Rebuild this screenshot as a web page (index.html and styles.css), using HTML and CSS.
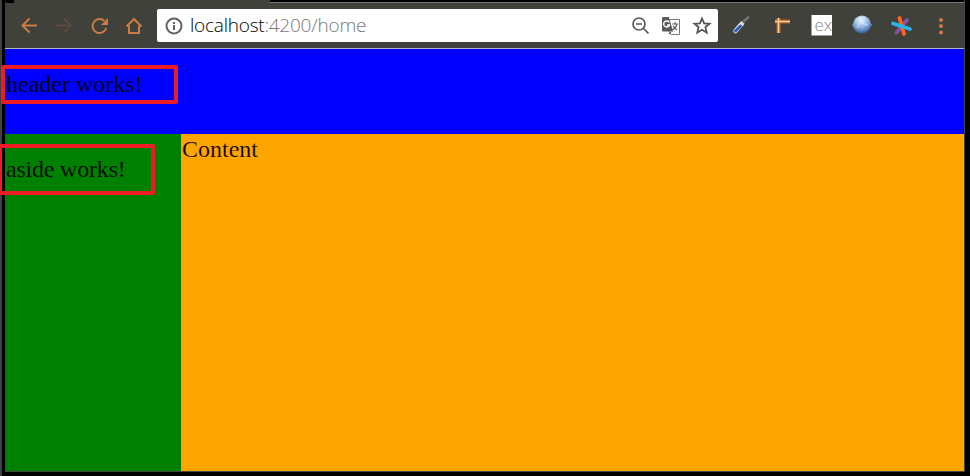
FILE: index.html
```html
<!DOCTYPE html>
<html lang="en">
<head>
<meta charset="utf-8">
<title>home</title>
<link rel="stylesheet" href="styles.css">
</head>
<body>
<div class="window">
  <div class="tabs"><i class="tab"></i><i class="strip"></i></div>
  <div class="toolbar">
    <svg class="nav" viewBox="0 0 140 40" fill="none" stroke="#cb7b45" stroke-width="2">
      <path d="M32 22.500H17.500M24.500 15.500L17.500 22.500L24.500 29.500"/>
      <path stroke="#5b4b3e" d="M51 22.500H66M59 15.500L66 22.500L59 29.500"/>
      <path d="M101.300 25A7 7 0 1 1 99.500 18"/>
      <path fill="#cb7b45" stroke="none" d="M103 15V22H96Z"/>
      <path d="M121.500 23.500L129 16L136.500 23.500M124 22.500V30H134V22.500"/>
    </svg>
    <div class="address">
      <svg class="info" viewBox="0 0 18 18" fill="none" stroke="#626262" stroke-width="2"><circle cx="9" cy="9" r="7.500"/><path d="M9 8V13M9 5V7"/></svg>
      <div class="url">localhost<span>:4200/home</span></div>
      <svg class="tools" viewBox="0 0 84 24" fill="none" stroke="#555" stroke-width="2">
        <path stroke-width="1.700" d="M14 10A6 6 0 1 1 2 10A6 6 0 1 1 14 10M12.500 14.500L17.500 19.500M5 10H11"/>
        <path fill="#fff" stroke="#777" stroke-width="1" d="M39 5.500H48.500V20.500H40L37 16"/>
        <path fill="#5b5b5b" stroke="none" d="M32 3H38L42 17.500H32Q31 17.500 31 16.500V4Q31 3 32 3Z"/>
        <path stroke="#fff" stroke-width="1.400" d="M38.300 8.500A3 3 0 1 0 38.500 11H36"/>
        <path stroke="#666" stroke-width="1.200" d="M41 10H47M44 8V10M46 10Q45 14 41 16M42 12L46 16M40 18L38 20"/>
        <path stroke-width="1.800" d="M71 4.500L73.100 9.300L78.500 9.800L74.400 13.200L75.700 18.700L71 15.800L66.300 18.700L67.600 13.200L63.500 9.800L68.900 9.300Z"/>
      </svg>
    </div>
    <svg class="extensions" viewBox="0 0 246 40">
      <path d="M17.500 28L24 20.500" stroke="#d9e4ee" stroke-width="4.500" stroke-linecap="round"/>
      <path d="M17.500 28L22.500 23" stroke="#315bb6" stroke-width="3" stroke-linecap="round"/>
      <path d="M24.500 19.500L31 13.500" stroke="#77716c" stroke-width="2.500"/>
      <path d="M57 18.500H72M60.500 15V30" stroke="#b76422" stroke-width="4"/>
      <path d="M57 18.500H72M60.500 15V30" stroke="#ffd39b" stroke-width="1.500"/>
      <path fill="#fff" d="M93.500 12H114V32.500H93.500Z"/>
      <text class="ex" x="96.500" y="27.500">ex</text>
      <defs><radialGradient id="globe" cx=".45" cy=".25" r=".8"><stop stop-color="#eaf7ff"/><stop offset=".5" stop-color="#91b7dd"/><stop offset="1" stop-color="#254c98"/></radialGradient></defs>
      <path d="M134 22L137 18H151L154 22L150 26H137Z" fill="#7398c1"/>
      <circle cx="144" cy="21.500" r="9" fill="url(#globe)"/>
      <path d="M138 15L142 20L139 25M142 20L150 22M147 14L145 20" stroke="#d4eafa" stroke-width=".7" fill="none"/>
      <g stroke-width="3.800" stroke-linecap="round"><path stroke="#8452a0" d="M178.500 29.500L189 17"/><path stroke="#ff651f" d="M181.500 15L186 31"/><path stroke="#2bb4e9" d="M175 20.500L192 26"/></g>
      <g fill="#cb7b45"><circle cx="223" cy="17" r="2"/><circle cx="223" cy="23" r="2"/><circle cx="223" cy="29.500" r="2"/></g>
    </svg>
  </div>
  <header class="header">header works!</header>
  <div class="main">
    <aside class="aside">aside works!</aside>
    <main class="content">Content</main>
  </div>
</div>
<div class="mark mark-header"></div>
<div class="mark mark-aside"></div>
</body>
</html>
```
FILE: styles.css
```css
* { box-sizing: border-box; }
body {
  margin: 0;
  width: 970px;
  height: 476px;
  padding-left: 5px;
  position: relative;
  overflow: hidden;
  background: linear-gradient(90deg, #414141 0 2px, #000 2px);
  font: 24px/28px "Liberation Serif", serif;
  color: #000;
}
.window {
  width: 960px;
  height: 472px;
  border-right: 1px solid #454545;
  border-bottom: 1px solid #454545;
  display: flex;
  flex-direction: column;
}
svg { display: block; flex: none; }
.tabs { height: 3px; display: flex; background: #40413a; }
.tab { width: 265px; border-left: 9px solid #000; border-bottom-left-radius: 3px; }
.strip { flex: 1; background: #000; border-bottom: 1px solid #777; }
.toolbar {
  height: 46px;
  display: flex;
  background: #40413a;
  border-bottom: 1px solid #b5b5b5;
}
.nav { width: 140px; height: 40px; margin-right: 12px; }
.address {
  flex: none;
  width: 561px;
  height: 33px;
  margin-top: 6px;
  padding: 0 6px 0 8px;
  display: flex;
  align-items: center;
  background: #fff;
  border-radius: 2px;
}
.info { width: 18px; height: 18px; margin-right: 7px; }
.url {
  flex: 1;
  font: 300 19px/30px "Open Sans", sans-serif;
  letter-spacing: -0.22px;
  white-space: nowrap;
  padding-bottom: 2px;
}
.url span { color: #777; }
.tools { width: 84px; height: 24px; margin-right: -3px; }
.extensions { width: 246px; height: 40px; }
.ex { font: 300 17px "Open Sans", sans-serif; fill: #888; }
.header, .aside, .content { -webkit-text-stroke-width: .2px; }
.header { height: 85px; background: #00f; padding: 21px 0 0 1px; -webkit-text-stroke-color: #00f; }
.main { flex: 1; display: flex; }
.aside { width: 176px; background: #008000; padding: 21px 0 0 1px; letter-spacing: -.2px; -webkit-text-stroke-color: #008000; }
.content { flex: 1; background: #ffa500; padding: 1px 0 0 1px; -webkit-text-stroke-color: #ffa500; }
.mark { position: absolute; border: 4px solid #ed1c24; border-radius: 2px; }
.mark-header { left: 1px; top: 65px; width: 177px; height: 39px; }
.mark-aside { left: -2px; top: 144px; width: 157px; height: 51px; }
```
